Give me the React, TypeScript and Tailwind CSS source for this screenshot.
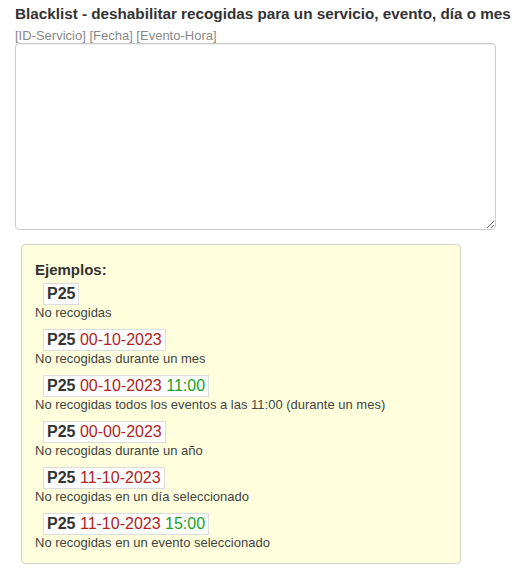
import React from "react";

interface Ejemplo {
    fecha?: string;
    hora?: string;
    texto: string;
}

const ejemplos: Ejemplo[] = [
    { texto: "No recogidas" },
    { fecha: "00-10-2023", texto: "No recogidas durante un mes" },
    { fecha: "00-10-2023", hora: "11:00", texto: "No recogidas todos los eventos a las 11:00 (durante un mes)" },
    { fecha: "00-00-2023", texto: "No recogidas durante un año" },
    { fecha: "11-10-2023", texto: "No recogidas en un día seleccionado" },
    { fecha: "11-10-2023", hora: "15:00", texto: "No recogidas en un evento seleccionado" },
];

const App: React.FC = () => {
    return (
        <div className="min-h-screen bg-white px-[15px] pt-[5px] font-['Liberation_Sans',Arial,sans-serif] text-[#333]">
            {/* Titulo */}
            <h3 className="text-[15.25px] leading-[18px] font-bold whitespace-nowrap">
                Blacklist - deshabilitar recogidas para un servicio, evento, día o mes
            </h3>
            <div className="mt-[5px] text-[13px] leading-[15px] text-[#888]">
                [ID-Servicio] [Fecha] [Evento-Hora]
            </div>

            <textarea
                className="block w-[481px] h-[187px] border border-[#ccc] rounded-[4px] bg-white shadow-[inset_0_1px_1px_rgba(0,0,0,0.075)] p-[6px] text-[13px] outline-none"
            />

            {/* Ejemplos */}
            <div className="mt-[14px] ml-[6px] w-[440px] bg-[#ffffdd] border border-[#d4d4c4] rounded-[4px] pt-[16px] pb-[12px] pl-[13px]">
                <div className="text-[15px] leading-[18px] font-bold">Ejemplos:</div>
                <div className="mt-[4px] flex flex-col gap-[8px]">
                    {ejemplos.map((e, i) => (
                        <div key={i} className="flex flex-col items-start">
                            <div className="ml-[8px] bg-white border border-[#ddd] px-[3px] text-[16px] leading-[20px] whitespace-nowrap">
                                <b className="text-[#333]">P25</b>
                                {e.fecha && <span className="text-[#b22222]"> {e.fecha}</span>}
                                {e.hora && <span className="text-[#22a022]"> {e.hora}</span>}
                            </div>
                            <div className="text-[13px] leading-[16px] text-[#444]">{e.texto}</div>
                        </div>
                    ))}
                </div>
            </div>
        </div>
    );
};

export default App;
